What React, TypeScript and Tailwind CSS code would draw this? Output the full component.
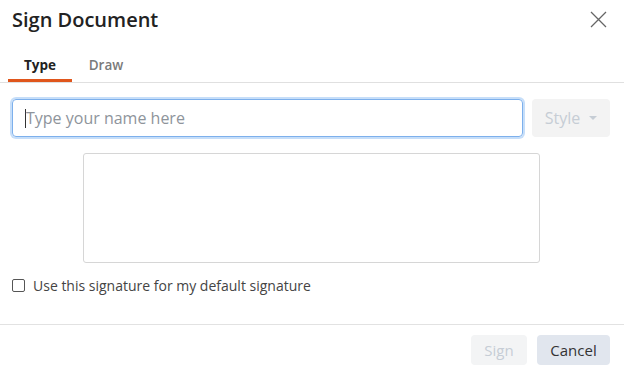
import React from "react";

export default function App() {
  return (
    <div className="w-[624px] h-[372px] bg-white flex flex-col text-[#333]" style={{ fontFamily: '"Open Sans", "Noto Sans", sans-serif' }}>
      {/* Header */}
      <div className="flex items-center justify-between pl-3 pr-[17px] h-[38px] pt-[1px]">
        <h1 className="text-[20px] font-semibold text-[#222] leading-none">Sign Document</h1>
        <button className="w-[18px] h-[18px] flex items-center justify-center text-[#666]">
          <svg width="17" height="17" viewBox="0 0 17 17" fill="none" stroke="currentColor" strokeWidth="1.3">
            <path d="M1 1 L16 16 M16 1 L1 16" />
          </svg>
        </button>
      </div>

      {/* Tabs */}
      <div className="flex pl-2 mt-[10px] border-b border-[#e0e0e0]">
        <div className="w-16 h-[34px] flex items-center justify-center text-[13.5px] font-bold text-[#222] border-b-[3px] border-[#e0561c] pt-[3px]">
          Type
        </div>
        <div className="w-16 ml-[2px] h-[34px] flex items-center justify-center text-[13.5px] font-semibold text-[#7a7a7a] border-b-[3px] border-transparent pt-[3px]">
          Draw
        </div>
      </div>

      {/* Input row */}
      <div className="flex gap-[9px] pl-3 pr-[14px] mt-4">
        <div className="flex-1 h-[38px] rounded-[4px] border border-[#7db0ec] shadow-[0_0_0_2px_rgba(160,200,245,0.6)] flex items-center pl-[12px]">
          <span className="w-px h-[19px] bg-[#333]" />
          <span className="text-[16px] text-[#8e949b]">Type your name here</span>
        </div>
        <div className="w-[78px] h-[38px] rounded-[4px] bg-[#f3f3f3] flex items-center justify-center gap-[9px]">
          <span className="text-[16px] text-[#c6cdd5]">Style</span>
          <svg width="8" height="5" viewBox="0 0 8 5" className="mt-[1px]">
            <path d="M0 0 L8 0 L4 4 Z" fill="#c6cdd5" />
          </svg>
        </div>
      </div>

      {/* Signature box */}
      <div className="mt-[16px] mx-auto w-[457px] h-[110px] border border-[#d6d6d6] rounded-[3px] translate-x-[-1px]" />

      {/* Checkbox row */}
      <label className="flex items-center gap-2 pl-3 mt-[12px]">
        <span className="w-[13px] h-[13px] border border-[#555] rounded-[2px] bg-white" />
        <span className="text-[14px] text-[#444]">Use this signature for my default signature</span>
      </label>

      {/* Footer */}
      <div className="mt-[28px] border-t border-[#e2e2e2] flex justify-end gap-[10px] pr-[14px] pt-[10px]">
        <button className="w-[56px] h-[30px] rounded-[4px] bg-[#f3f4f5] text-[15px] text-[#c6cdd5]">Sign</button>
        <button className="w-[73px] h-[30px] rounded-[4px] bg-[#e1e6ee] text-[15px] text-[#333]">Cancel</button>
      </div>
    </div>
  );
}
